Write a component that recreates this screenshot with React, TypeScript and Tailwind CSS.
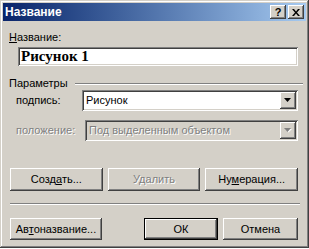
import React from 'react'

const raised =
  'bg-[#d4d0c8] shadow-[inset_-1px_-1px_#404040,inset_1px_1px_#ffffff,inset_-2px_-2px_#808080,inset_2px_2px_#d4d0c8]'
const sunken =
  'shadow-[inset_1px_1px_#808080,inset_-1px_-1px_#ffffff,inset_2px_2px_#404040,inset_-2px_-2px_#d4d0c8]'
const disabledText = 'text-[#808080] [text-shadow:1px_1px_#ffffff]'

function Btn({ children, disabled, isDefault, className = '' }: { children: React.ReactNode; disabled?: boolean; isDefault?: boolean; className?: string }) {
  return (
    <div className={`${className} ${isDefault ? 'border border-black' : ''}`}>
      <div className={`${raised} h-full flex items-center justify-center ${disabled ? disabledText : 'text-black'}`}>
        {children}
      </div>
    </div>
  )
}

function Combo({ value, disabled, className = '' }: { value: string; disabled?: boolean; className?: string }) {
  return (
    <div className={`${sunken} ${disabled ? 'bg-[#d4d0c8]' : 'bg-white'} h-[21px] flex items-center p-[2px] ${className}`}>
      <span className={`flex-1 pl-[2px] ${disabled ? disabledText : 'text-black'}`}>{value}</span>
      <div className={`${raised} w-4 h-[17px] flex items-center justify-center`}>
        <svg width="8" height="5" viewBox="0 0 8 5">
          {disabled && <path d="M1 1h7L4.5 4.5z" fill="#ffffff" />}
          <path d="M0 0h7L3.5 4z" fill={disabled ? '#808080' : '#000000'} />
        </svg>
      </div>
    </div>
  )
}

export default function App() {
  return (
    <div
      className="w-[309px] h-[248px] bg-[#d4d0c8] p-[3px] text-[11px] leading-[13px] shadow-[inset_-1px_-1px_#404040,inset_1px_1px_#d4d0c8,inset_-2px_-2px_#808080,inset_2px_2px_#ffffff]"
      style={{ fontFamily: '"Liberation Sans", Arial, sans-serif' }}
    >
      {/* Title bar */}
      <div className="h-[18px] bg-linear-to-r from-[#0a246a] to-[#a6caf0] flex items-center pl-[2px] pr-[2px]">
        <span className="flex-1 text-white font-bold text-[12px]">Название</span>
        <div className="flex gap-[2px]">
          <div className={`${raised} w-4 h-[14px] flex items-center justify-center font-bold text-[11px] text-black`}>?</div>
          <div className={`${raised} w-4 h-[14px] flex items-center justify-center`}>
            <svg width="8" height="7" viewBox="0 0 8 7">
              <path d="M0 0h2l2 2.5L6 0h2L5 3.5 8 7H6L4 4.5 2 7H0l3-3.5z" fill="#000" />
            </svg>
          </div>
        </div>
      </div>

      {/* Body */}
      <div className="pl-[6px] pr-[5px]">
        <div className="mt-[10px]">
          <span className="underline">Н</span>азвание:
        </div>
        <div className={`${sunken} bg-white h-[19px] ml-[9px] mr-[3px] mt-[3px] flex items-center pl-[3px]`}>
          <span className="font-bold text-[15px] text-black" style={{ fontFamily: '"Liberation Serif", "Times New Roman", serif' }}>
            Рисунок 1
          </span>
        </div>

        <div className="mt-[11px] flex items-center">
          <span>Параметры</span>
          <div className="flex-1 ml-[7px] mr-[-2px] h-[2px] border-t border-[#808080] border-b border-b-white" />
        </div>

        <div className="flex items-center">
          <span className="w-[73px] pl-[7px]">
            по<span className="underline">д</span>пись:
          </span>
          <Combo value="Рисунок" className="flex-1 mr-[3px]" />
        </div>

        <div className="flex items-center mt-[9px]">
          <span className={`w-[76px] pl-[7px] ${disabledText}`}>положение:</span>
          <Combo value="Под выделенным объектом" disabled className="flex-1 mr-[3px]" />
        </div>

        <div className="grid grid-cols-3 gap-[5px] mt-[27px] ml-[1px] mr-[3px]">
          <Btn className="h-[23px]">
            <span>Созд<span className="underline">а</span>ть...</span>
          </Btn>
          <Btn className="h-[23px]" disabled>Удалить</Btn>
          <Btn className="h-[23px]">
            <span>Ну<span className="underline">м</span>ерация...</span>
          </Btn>
        </div>

        <div className="mt-[12px] ml-[1px] mr-[1px] h-[2px] border-t border-[#808080] border-b border-b-white" />

        <div className="flex mt-[13px] ml-[1px] mr-[3px]">
          <Btn className="h-[22px] w-[92px]">
            <span>Ав<span className="underline">т</span>оназвание...</span>
          </Btn>
          <div className="flex-1" />
          <Btn className="h-[22px] w-[74px]" isDefault>ОК</Btn>
          <Btn className="h-[22px] w-[75px] ml-[5px]">Отмена</Btn>
        </div>
      </div>
    </div>
  )
}
